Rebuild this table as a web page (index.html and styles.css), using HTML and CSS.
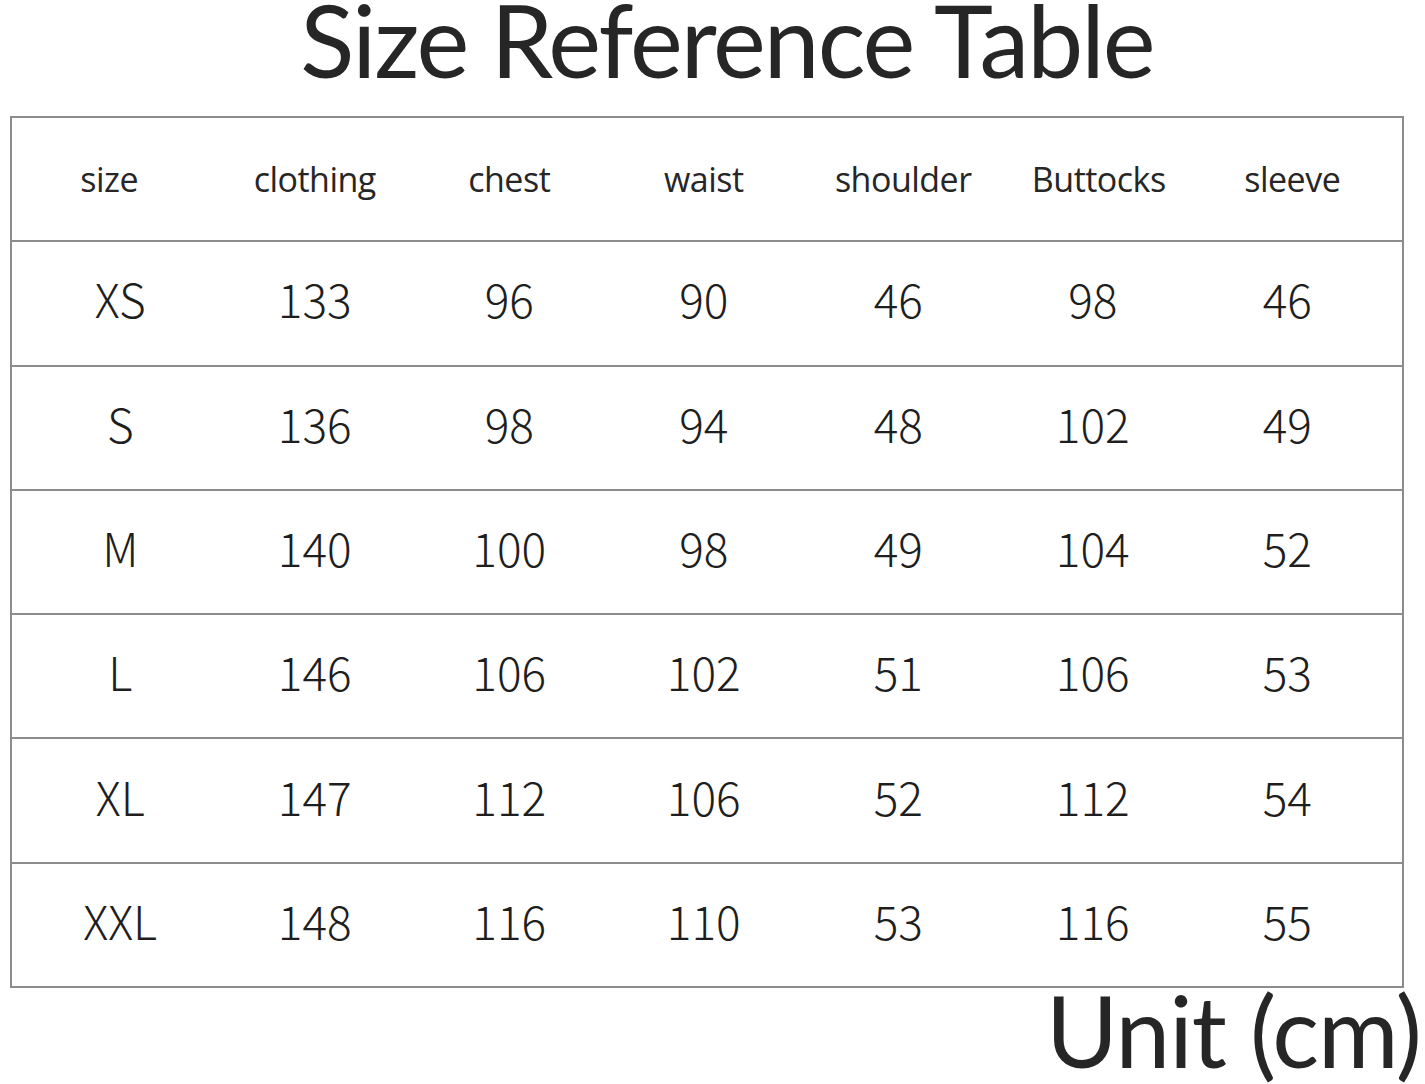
FILE: index.html
```html
<!DOCTYPE html>
<html lang="en">
<head>
<meta charset="utf-8">
<title>Size Reference Table</title>
<link rel="stylesheet" href="styles.css">
</head>
<body>
<h1 class="title">Size Reference Table</h1>
<div class="table">
  <div class="row head">
    <div class="cell c-size">size</div>
    <div class="cell">clothing</div>
    <div class="cell">chest</div>
    <div class="cell">waist</div>
    <div class="cell c-shoulder">shoulder</div>
    <div class="cell c-buttocks">Buttocks</div>
    <div class="cell c-sleeve">sleeve</div>
  </div>
  <div class="row"><div class="cell">XS</div><div class="cell">133</div><div class="cell">96</div><div class="cell">90</div><div class="cell">46</div><div class="cell">98</div><div class="cell">46</div></div>
  <div class="row"><div class="cell">S</div><div class="cell">136</div><div class="cell">98</div><div class="cell">94</div><div class="cell">48</div><div class="cell">102</div><div class="cell">49</div></div>
  <div class="row"><div class="cell">M</div><div class="cell">140</div><div class="cell">100</div><div class="cell">98</div><div class="cell">49</div><div class="cell">104</div><div class="cell">52</div></div>
  <div class="row"><div class="cell">L</div><div class="cell">146</div><div class="cell">106</div><div class="cell">102</div><div class="cell">51</div><div class="cell">106</div><div class="cell">53</div></div>
  <div class="row"><div class="cell">XL</div><div class="cell">147</div><div class="cell">112</div><div class="cell">106</div><div class="cell">52</div><div class="cell">112</div><div class="cell">54</div></div>
  <div class="row"><div class="cell">XXL</div><div class="cell">148</div><div class="cell">116</div><div class="cell">110</div><div class="cell">53</div><div class="cell">116</div><div class="cell">55</div></div>
</div>
<div class="unit">Unit (cm)</div>
</body>
</html>
```
FILE: styles.css
```css
html, body {
  margin: 0;
  padding: 0;
  background: #ffffff;
}
body {
  width: 1425px;
  height: 1084px;
  overflow: hidden;
  color: #232323;
  font-family: "Open Sans", "Noto Sans", sans-serif;
}
.title {
  margin: 0 0 38px 0;
  height: 78px;
  line-height: 78px;
  font-family: Lato, "Open Sans", sans-serif;
  font-size: 100px;
  font-weight: 400;
  letter-spacing: -2px;
  text-align: center;
  padding-left: 29px;
  color: #262626;
}
.table {
  margin-left: 10px;
  width: 1390px;
  border: 2px solid #8c8c8c;
  box-sizing: content-box;
}
.row {
  display: grid;
  grid-template-columns: repeat(7, 194.5px);
  padding-left: 11px;
  height: 122.3px;
  align-items: center;
  border-top: 2px solid #8c8c8c;
}
.row:first-child {
  border-top: none;
}
.cell {
  text-align: center;
  font-family: "Noto Sans CJK SC", "Noto Sans", sans-serif;
  font-weight: 300;
  font-size: 46px;
  line-height: 1;
  padding-bottom: 10px;
  color: #1e1e1e;
}
.head .cell {
  font-family: "Open Sans", "Noto Sans", sans-serif;
  font-weight: 500;
  font-size: 34px;
  padding-bottom: 0;
  color: #262626;
  letter-spacing: -0.5px;
}
.head .c-size { padding-right: 22px; }
.head .c-shoulder { padding-left: 10px; }
.head .c-buttocks { padding-left: 12px; }
.head .c-sleeve { padding-left: 10px; }
.unit {
  margin-top: 2px;
  height: 80px;
  line-height: 80px;
  font-family: Lato, "Open Sans", sans-serif;
  font-size: 98px;
  font-weight: 400;
  letter-spacing: -1px;
  text-align: right;
  padding-right: 4px;
  color: #262626;
}
```
